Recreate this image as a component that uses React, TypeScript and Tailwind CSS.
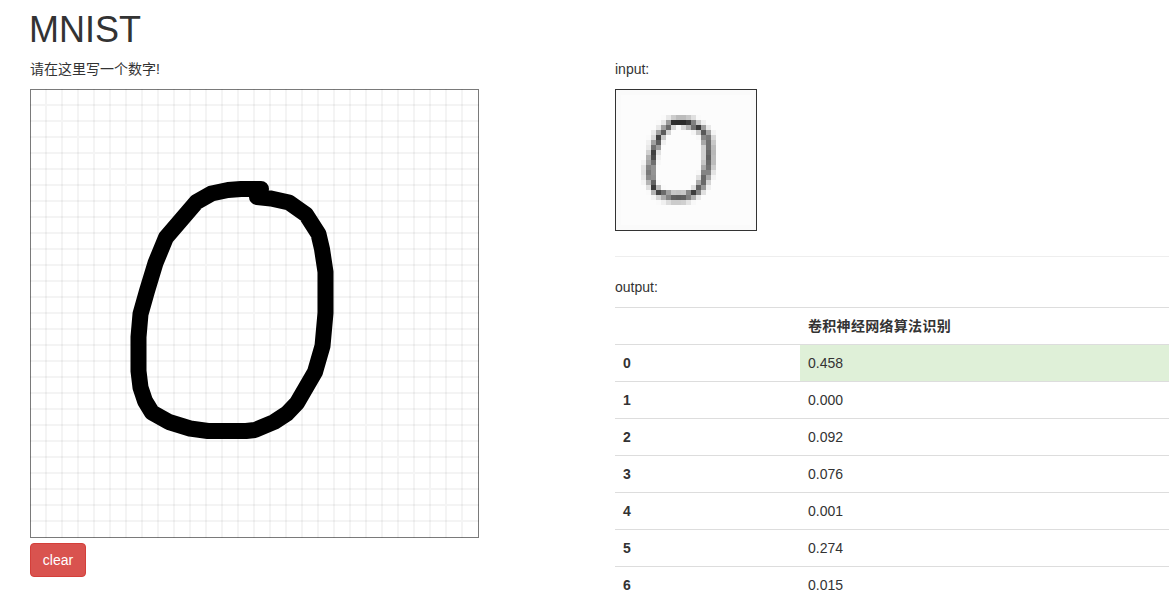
const STROKE: [number, number][] = [
  [227, 108], [241, 109.5], [259, 113.5], [276, 125.5], [288.5, 145], [292, 160], [295.5, 183], [295.5, 224],
  [292.5, 257], [285, 283], [267, 314], [257, 324.5], [244, 333], [225, 341], [216, 342], [178, 342],
  [160, 339.5], [139, 333], [122, 323.5], [115, 312], [110.5, 298.5], [108.5, 282], [108.5, 248],
  [110.5, 225], [117, 202], [125.5, 174], [136, 148.5], [166.5, 113], [181.5, 104.5], [198, 101], [211, 100], [231, 100],
];

// Runs of grey levels in the 28x28 sample: [row, first column, hex pairs].
const CELLS: [number, number, string][] = [
  [5, 9, 'fae8ccbcbcc8e0fa'],
  [6, 8, 'fae89a2c2a2a3c80c8f0'],
  [7, 8, 'e8a068d4f8d8b070389ce8'],
  [8, 7, 'eaa05cd4'],
  [8, 15, 'f4c858a4f4'],
  [9, 6, 'fad840c8'],
  [9, 16, 'f88878d8'],
  [10, 6, 'f0a05ef0'],
  [10, 16, 'fca870c8'],
  [11, 6, 'e8709c'],
  [11, 17, 'd070bc'],
  [12, 6, 'd040e0'],
  [12, 17, 'd068b8'],
  [13, 6, 'b04cf0'],
  [13, 17, 'd060bc'],
  [14, 5, 'f4a470f8'],
  [14, 17, 'c468bc'],
  [15, 5, 'e48494'],
  [15, 17, 'a870cc'],
  [16, 5, 'e07894'],
  [16, 16, 'f88484e4'],
  [17, 5, 'e88890'],
  [17, 16, 'e068a8f4'],
  [18, 5, 'f4b464f8'],
  [18, 16, 'ac68d4'],
  [19, 6, 'e03cbcfa'],
  [19, 15, 'e06098f0'],
  [20, 6, 'fab4446ca0c8c4c8883c84e0'],
  [21, 7, 'f4d4ac84605c6080b0e8'],
  [22, 8, 'faf0dcccccd0e4f8'],
];

const ROWS = ['0.458', '0.000', '0.092', '0.076', '0.001', '0.274', '0.015'];

const lines = Array.from({ length: 27 }, (_, i) => (i + 1) * 16);

function DrawingPad() {
  return (
    <svg width="449" height="449" viewBox="0 0 449 449" className="block">
      <rect width="449" height="449" fill="#fff" />
      <g stroke="#000" strokeOpacity="0.045" strokeWidth="2">
        {lines.map((p) => (
          <path key={p} d={`M${p} 0V449M0 ${p}H449`} />
        ))}
      </g>
      <rect width="449" height="449" fill="none" stroke="#000" strokeOpacity="0.52" strokeWidth="2" />
      <polyline
        points={STROKE.map((p) => p.join(',')).join(' ')}
        fill="none"
        stroke="#000"
        strokeWidth="16"
        strokeLinecap="round"
        strokeLinejoin="round"
      />
    </svg>
  );
}

function Sample() {
  return (
    <svg width="142" height="142" viewBox="0 0 142 142" shapeRendering="crispEdges" className="block">
      <rect width="142" height="142" fill="#333" />
      <rect x="1" y="1" width="140" height="140" fill="#fafafa" />
      <rect x="6" y="6" width="130" height="130" fill="#fcfcfc" />
      {CELLS.map(([row, col, hex]) =>
        (hex.match(/../g) ?? []).map((h, i) => (
          <rect
            key={`${row}-${col + i}`}
            x={1 + (col + i) * 5}
            y={1 + row * 5}
            width="5"
            height="5"
            fill={`#${h}${h}${h}`}
          />
        )),
      )}
    </svg>
  );
}

export default function App() {
  return (
    <div className="h-[594px] w-full overflow-hidden bg-white font-['Liberation_Sans','Noto_Sans_CJK_SC',sans-serif] text-sm leading-5 text-[#333]">
      <div className="w-[1200px] px-[30px] pt-2.5">
        <h1 className="-ml-px mb-[9px] h-10 text-[36px] leading-10">MNIST</h1>
        <div className="grid grid-cols-[555px_555px] gap-[30px]">
          <section>
            <p className="mb-2.5 h-5">请在这里写一个数字!</p>
            <DrawingPad />
            <button className="mt-[5px] block h-[34px] w-14 rounded border border-[#d43f3a] bg-[#d9534f] text-center text-white">
              clear
            </button>
          </section>
          <section>
            <p className="mb-2.5 h-5">input:</p>
            <Sample />
            <hr className="mt-[25px] mb-5 border-[#eee]" />
            <p className="mb-2.5 h-5">output:</p>
            <table className="w-full table-fixed border-separate border-spacing-0 text-left">
              <thead>
                <tr className="h-[37px]">
                  <th className="w-[185px] border-t border-[#ddd] p-2" />
                  <th className="border-t border-[#ddd] px-2 py-0 font-bold tracking-[0.3px]">卷积神经网络算法识别</th>
                </tr>
              </thead>
              <tbody>
                {ROWS.map((value, digit) => (
                  <tr key={digit} className="h-[37px]">
                    <th className="border-t border-[#ddd] px-2 py-0 font-bold">{digit}</th>
                    <td className={`border-t border-[#ddd] px-2 py-0 ${digit === 0 ? 'bg-[#dff0d8]' : ''}`}>{value}</td>
                  </tr>
                ))}
              </tbody>
            </table>
          </section>
        </div>
      </div>
    </div>
  );
}
